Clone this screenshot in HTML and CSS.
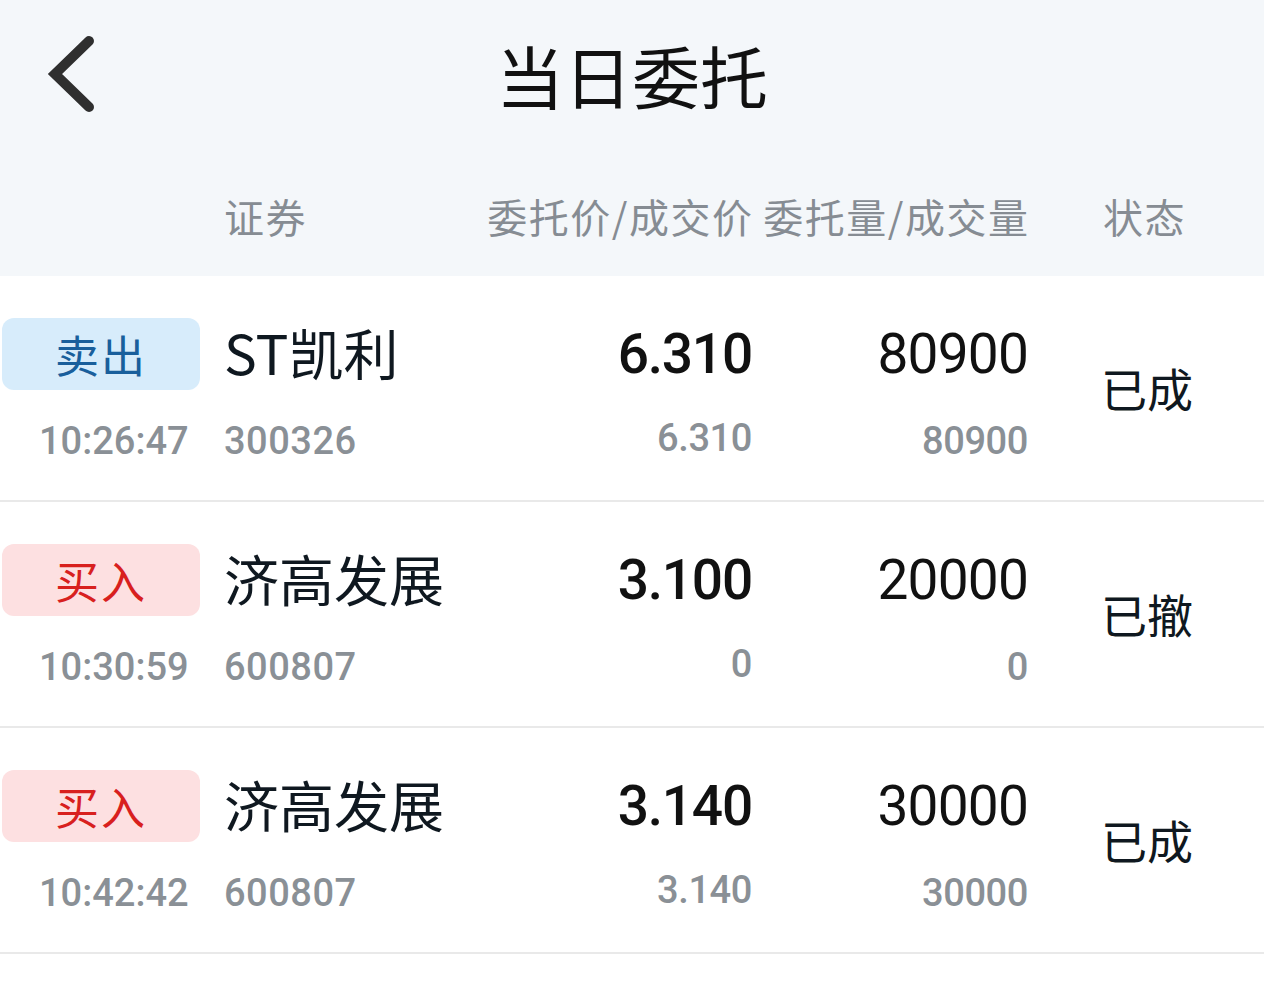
FILE: index.html
```html
<!doctype html>
<html>
  <head>
    <meta charset="utf-8" />
    <link rel="stylesheet" href="styles.css">
  </head>
  <body>
    <div class="topbar">
      <div class="nav">
        <a class="back" href="#" title="返回">
          <svg width="56" height="84" viewBox="0 0 56 84">
            <polyline points="45,9 11,42 45,75" fill="none" stroke="#2f2f2f" stroke-width="10" stroke-linejoin="miter" stroke-linecap="round" />
          </svg>
        </a>
        <h1 class="title">当日委托</h1>
        <div></div>
      </div>

      <div class="row-grid cols">
        <span></span>
        <span class="sec">证券</span>
        <span class="num">委托价/成交价</span>
        <span class="num">委托量/成交量</span>
        <span class="state">状态</span>
      </div>
    </div>

    <ul class="orders">
      <li class="row-grid order">
        <span class="tag tag-sell">卖出</span>
        <span class="sec name">ST凯利</span>
        <span class="num main">6.310</span>
        <span class="num main qty">80900</span>
        <span class="state status">已成</span>
        <span class="time">10:26:47</span>
        <span class="sec code">300326</span>
        <span class="num sub price-sub">6.310</span>
        <span class="num sub">80900</span>
      </li>
      <li class="row-grid order">
        <span class="tag tag-buy">买入</span>
        <span class="sec name">济高发展</span>
        <span class="num main">3.100</span>
        <span class="num main qty">20000</span>
        <span class="state status">已撤</span>
        <span class="time">10:30:59</span>
        <span class="sec code">600807</span>
        <span class="num sub price-sub">0</span>
        <span class="num sub">0</span>
      </li>
      <li class="row-grid order">
        <span class="tag tag-buy">买入</span>
        <span class="sec name">济高发展</span>
        <span class="num main">3.140</span>
        <span class="num main qty">30000</span>
        <span class="state status">已成</span>
        <span class="time">10:42:42</span>
        <span class="sec code">600807</span>
        <span class="num sub price-sub">3.140</span>
        <span class="num sub">30000</span>
      </li>
    </ul>
  </body>
</html>
```

FILE: styles.css
```css
body {
  margin: 0;
  font-family: "Noto Sans CJK SC", "Noto Sans", sans-serif;
  background: white;
  color: #0f1820;
}
.topbar {
  background: #f4f7fa;
}
.nav {
  height: 160px;
  display: grid;
  grid-template-columns: 1fr auto 1fr;
  align-items: center;
}
.back {
  display: block;
  width: 56px;
  height: 84px;
  margin-left: 44px;
  margin-top: -12px;
}
.back svg {
  display: block;
}
.title {
  margin: -10px 0 0;
  font-size: 68px;
  font-weight: 400;
  line-height: 1;
  color: #111;
  letter-spacing: 0;
}

/* shared column grid for header and rows */
.row-grid {
  display: grid;
  grid-template-columns: 198px 360px 192px 276px 1fr;
  padding-left: 2px;
}
.sec {
  padding-left: 24px;
}
.num {
  justify-self: end;
  white-space: nowrap;
}
.state {
  padding-left: 75px;
}
.cols {
  height: 116px;
  align-items: center;
  font-size: 40px;
  color: #868c93;
  line-height: 1;
  letter-spacing: 1.5px;
}
.cols > span {
  margin-top: -4px;
}
.cols .num {
  margin-right: -1.5px;
}

.orders {
  list-style: none;
  margin: 0;
  padding: 0;
}
.order {
  grid-template-rows: 72px 48px;
  row-gap: 27px;
  padding-top: 42px;
  padding-bottom: 35px;
  border-bottom: 2px solid #e9e9e9;
  align-items: center;
}
.tag {
  display: flex;
  align-items: center;
  justify-content: center;
  height: 72px;
  border-radius: 12px;
  font-size: 44px;
  letter-spacing: 2px;
}
.tag-sell {
  background: #d7ecfb;
  color: #195f9c;
}
.tag-buy {
  background: #fde0e1;
  color: #d8201e;
}
.name {
  font-size: 55px;
  line-height: 1;
  margin-top: -6px;
}
.main {
  font-family: Roboto, "Noto Sans", sans-serif;
  font-size: 55px;
  font-weight: 500;
  letter-spacing: -1.2px;
  line-height: 1;
  color: #111;
}
.main.qty {
  font-weight: 400;
  letter-spacing: -0.8px;
}
.status {
  grid-row: 1 / span 2;
  grid-column: 5;
  font-size: 46px;
  line-height: 1;
  margin-top: -10px;
  padding-left: 73px;
}
.time,
.code,
.sub {
  font-family: Roboto, "Noto Sans", sans-serif;
  font-size: 38px;
  font-weight: 500;
  line-height: 48px;
  color: #8a9096;
}
.time {
  padding-left: 37px;
  letter-spacing: 0;
}
.code {
  letter-spacing: 0.5px;
}
.sub {
  letter-spacing: -0.4px;
}
.price-sub {
  margin-top: -6px;
}
```
